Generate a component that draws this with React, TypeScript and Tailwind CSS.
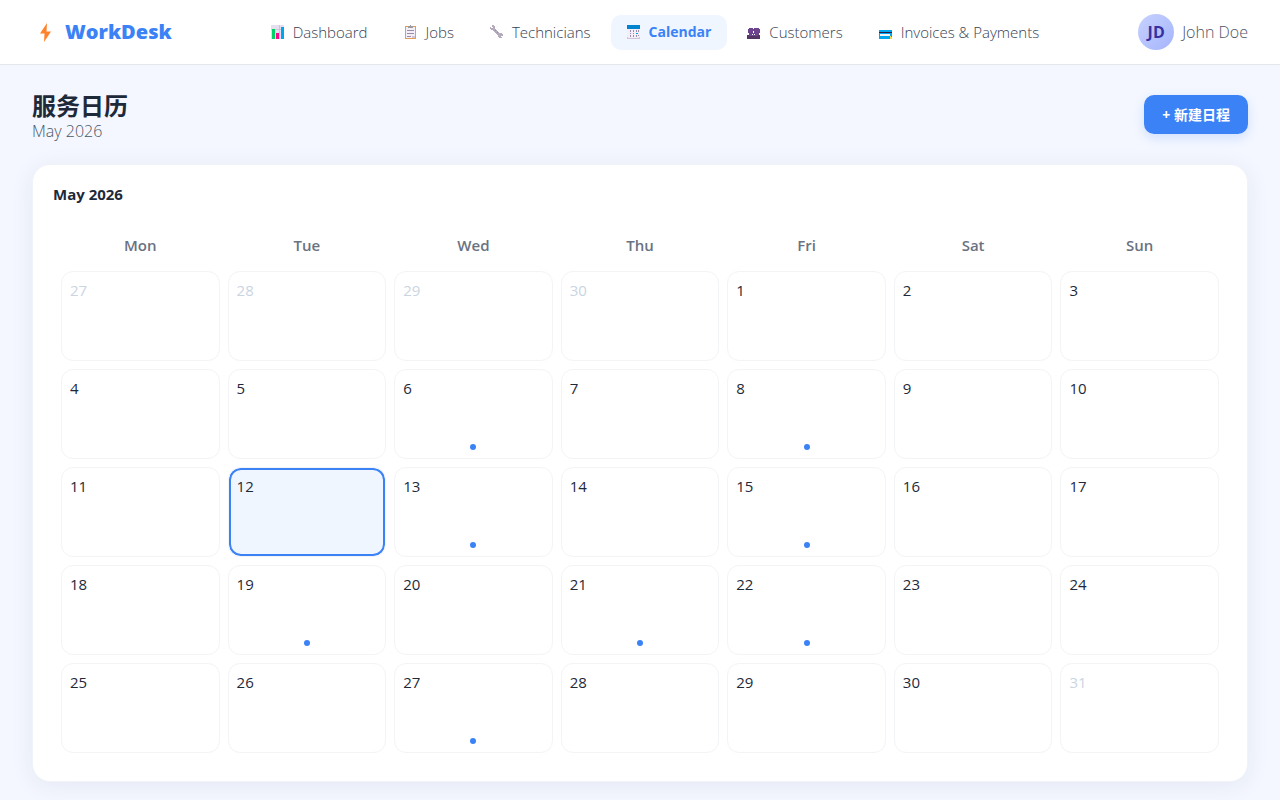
/*
 * WorkDesk: service calendar page
 * Top navigation bar and a month grid with event dots.
 */

import type { ReactNode } from "react";
import { clsx } from "clsx";

const WEEKDAYS = ["Mon", "Tue", "Wed", "Thu", "Fri", "Sat", "Sun"];

const WEEKS = [
  [27, 28, 29, 30, 1, 2, 3],
  [4, 5, 6, 7, 8, 9, 10],
  [11, 12, 13, 14, 15, 16, 17],
  [18, 19, 20, 21, 22, 23, 24],
  [25, 26, 27, 28, 29, 30, 31],
];

const SELECTED_DAY = 12;
const EVENT_DAYS = [6, 8, 13, 15, 19, 21, 22, 27];

function Icon({ children }: { children: ReactNode }) {
  return (
    <svg viewBox="0 0 14 14" className="size-3.5 shrink-0" aria-hidden="true" shapeRendering="crispEdges">
      {children}
    </svg>
  );
}

function ChartIcon() {
  return (
    <Icon>
      <path d="M0 0h13v14H0z" fill="#e5dff0" />
      <path d="M0 4h13v1H0zM8 0h1v14H8z" fill="#cdc4d6" />
      <path d="M1 4h3v10H1z" fill="#00d26a" />
      <path d="M5 8h3v6H5z" fill="#f70a8d" />
      <path d="M10 2h3v12h-3z" fill="#00a6ed" />
    </Icon>
  );
}

function ClipboardIcon() {
  return (
    <Icon>
      <path d="M1 1h11v13H1z" fill="#e39d54" />
      <path d="M2 2h9v11H2z" fill="#f3eef8" />
      <path d="M4 1h2V0h1v1h2v2H4z" fill="#9b9b9b" />
      <path d="M3 5h7v1H3zM3 8h7v1H3zM3 11h4v1H3z" fill="#998ea4" />
      <path d="M8 11h3v2H8z" fill="#cdc4d6" />
      <path d="M11 11h1v2h-1z" fill="#e39d54" />
    </Icon>
  );
}

function WrenchIcon() {
  return (
    <Icon>
      <path
        d="M2 0h2v1h1v3h1v1h1v1h1v1h1v1h3v1h1v2h-2v1h1v1H9v-1H8v-2H7V9H6V8H5V7H4V6H3V5H1V4H0V2h1v1h2V2H2z"
        fill="#b4acbc"
      />
      <path d="M5 5h1v1H5zM7 7h1v1H7z" fill="#998ea4" />
    </Icon>
  );
}

function CalendarIcon() {
  return (
    <Icon>
      <path d="M0 0h13v14H0z" fill="#f3eef8" />
      <path d="M0 0h13v4H0z" fill="#0084ce" />
      <path d="M0 12h1v1h11v-1h1v2H0z" fill="#cdc4d6" />
      <path
        d="M6 5h1v2H6zM9 5h1v2H9zM3 8h1v1H3zM6 8h1v1H6zM3 10h1v2H3zM6 10h1v2H6zM9 10h1v2H9zM3 5h1v2H3z"
        fill="#998ea4"
      />
      <path d="M9 8h2v1H9z" fill="#00a6ed" />
      <path d="M11 5h1v2h-1zM11 10h1v1h-1z" fill="#998ea4" />
    </Icon>
  );
}

function PeopleIcon() {
  return (
    <Icon>
      <path d="M2 3h4v1h1V3h5v1h1v4h-1v2h1v4H0v-4h2V8H1V4h1z" fill="#6d4390" />
      <path d="M0 10h2v1h9v-1h2v4H0z" fill="#533566" />
      <path d="M6 6h1v2H6zM7 9h1v1H7zM5 9h1v1H5z" fill="#ffffff" />
    </Icon>
  );
}

function CardIcon() {
  return (
    <Icon>
      <path d="M0 5h13v9H0z" fill="#00a6ed" />
      <path d="M0 7h13v1H0z" fill="#321b41" />
      <path d="M1 9h10v2H1z" fill="#f4f4f4" />
      <path d="M11 11h1v1h1v2h-2z" fill="#fcd53f" />
    </Icon>
  );
}

const NAV_ITEMS = [
  { label: "Dashboard", icon: <ChartIcon /> },
  { label: "Jobs", icon: <ClipboardIcon /> },
  { label: "Technicians", icon: <WrenchIcon /> },
  { label: "Calendar", icon: <CalendarIcon />, active: true },
  { label: "Customers", icon: <PeopleIcon /> },
  { label: "Invoices & Payments", icon: <CardIcon /> },
];

function Header() {
  return (
    <header className="flex h-[65px] items-center justify-between border-b border-gray-200 bg-white px-8">
      <a href="#" className="flex items-center gap-3 text-xl font-extrabold text-[#3b82f6]">
        <svg viewBox="0 0 21 20" className="h-5 w-[21px]" aria-hidden="true">
          <path d="M15 1 8 11.500h4.500L12 20l7-10.500h-4.500z" fill="#ff822d" />
        </svg>
        WorkDesk
      </a>

      <nav className="flex gap-1">
        {NAV_ITEMS.map((item) => (
          <a
            key={item.label}
            href="#"
            aria-current={item.active ? "page" : undefined}
            className={clsx(
              "flex h-[35px] items-center gap-2 rounded-[10px] px-4 whitespace-nowrap",
              item.active
                ? "bg-[#eff6ff] text-sm font-bold text-[#3b82f6]"
                : "text-[15px] font-light text-gray-700"
            )}
          >
            {item.icon}
            {item.label}
          </a>
        ))}
      </nav>

      <div className="flex items-center gap-2">
        <div className="flex size-9 items-center justify-center rounded-full bg-linear-135 from-[#c7d2fe] to-[#a5b4fc] text-base font-bold text-[#3730a3]">
          JD
        </div>
        <span className="text-base font-light text-gray-600">John Doe</span>
      </div>
    </header>
  );
}

function DayCell({ day, muted }: { day: number; muted: boolean }) {
  const selected = !muted && day === SELECTED_DAY;
  const hasEvent = !muted && EVENT_DAYS.includes(day);

  return (
    <td
      className={clsx(
        "relative h-[90px] rounded-xl border border-gray-100 p-2 align-top",
        selected && "bg-[#eff6ff] bg-clip-padding inset-ring-2 inset-ring-[#3b82f6]",
        muted ? "text-slate-300" : "text-gray-800"
      )}
    >
      {day}
      {/* Event marker */}
      {hasEvent && (
        <span className="absolute bottom-2 left-1/2 size-1.5 -translate-x-1/2 rounded-full bg-[#3b82f6]" />
      )}
    </td>
  );
}

function MonthCard() {
  return (
    <section className="rounded-[18px] border border-[#f1f3fb] bg-white p-5 shadow-[0_4px_24px_rgba(30,41,90,0.07)]">
      <h2 className="mb-4 text-[15px] leading-[19px] font-bold text-gray-800">May 2026</h2>
      <table className="w-full table-fixed border-separate border-spacing-2 text-[15px] leading-5">
        <thead>
          <tr>
            {WEEKDAYS.map((name) => (
              <th key={name} scope="col" className="h-[35px] p-0 pb-0.5 font-semibold text-gray-500">
                {name}
              </th>
            ))}
          </tr>
        </thead>
        <tbody>
          {WEEKS.map((week, row) => (
            <tr key={row}>
              {week.map((day, col) => (
                <DayCell key={day} day={day} muted={(row === 0 && col < 4) || day === 31} />
              ))}
            </tr>
          ))}
        </tbody>
      </table>
    </section>
  );
}

export default function App() {
  return (
    <div className="min-h-screen bg-[#f4f7ff] font-['Open_Sans','Noto_Sans_CJK_SC',sans-serif]">
      <Header />
      <main className="px-8 pt-[27px] pb-[18px]">
        <div className="mb-[23px] flex items-start justify-between">
          <div>
            <h1 className="mb-px text-2xl leading-7 font-bold text-gray-800">服务日历</h1>
            <p className="text-base leading-5 font-light text-gray-600">May 2026</p>
          </div>
          <button
            type="button"
            className="mt-[3px] h-[39px] rounded-[10px] bg-[#3b82f6] px-[18px] text-sm font-bold text-white shadow-[0_4px_12px_rgba(59,130,246,0.2)]"
          >
            + 新建日程
          </button>
        </div>
        <MonthCard />
      </main>
    </div>
  );
}
